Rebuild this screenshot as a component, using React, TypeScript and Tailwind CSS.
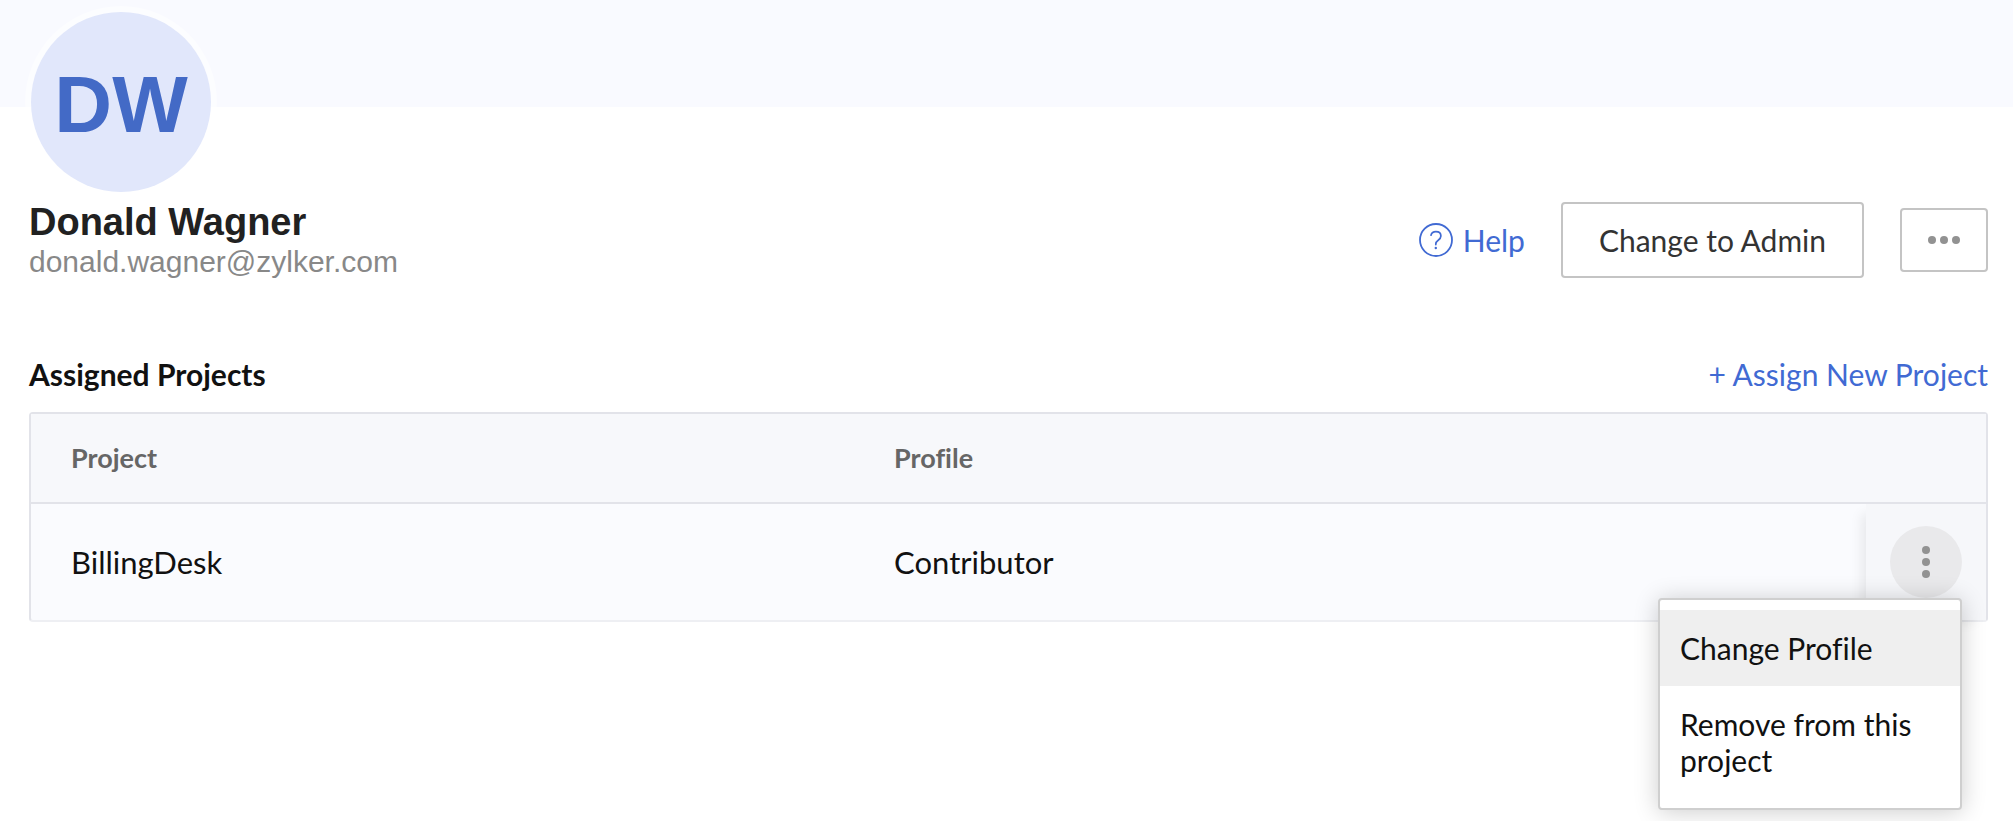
import { useState } from "react";

const projects = [{ name: "BillingDesk", profile: "Contributor" }];

function HelpIcon() {
  return (
    <svg viewBox="0 0 34 34" className="size-[34px] shrink-0" fill="none" stroke="currentColor" aria-hidden="true">
      <circle cx="17" cy="17" r="16" strokeWidth="1.8" />
      <path
        d="M12 12.2c.6-2.2 2.4-3.5 4.9-3.5 3 0 5 1.7 5 4.3 0 2.1-1.2 3.1-2.7 4.2-1.6 1.1-2.4 2-2.4 3.9v.5"
        strokeWidth="1.7"
        strokeLinecap="round"
      />
      <circle cx="16.8" cy="25" r="1.2" fill="currentColor" stroke="none" />
    </svg>
  );
}

function MoreHorizontal() {
  return (
    <svg viewBox="0 0 32 8" className="h-2 w-8" fill="currentColor" aria-hidden="true">
      <circle cx="4" cy="4" r="4" />
      <circle cx="16" cy="4" r="4" />
      <circle cx="28" cy="4" r="4" />
    </svg>
  );
}

function MoreVertical() {
  return (
    <svg viewBox="0 0 8 32" className="h-8 w-2" fill="currentColor" aria-hidden="true">
      <circle cx="4" cy="4" r="4" />
      <circle cx="4" cy="16" r="4" />
      <circle cx="4" cy="28" r="4" />
    </svg>
  );
}

function RowMenu() {
  const [open, setOpen] = useState(true);
  return (
    <div className="relative mx-auto size-[72px] text-[30px]">
      <button
        type="button"
        aria-label="Project actions"
        aria-haspopup="menu"
        aria-expanded={open}
        onClick={() => setOpen(!open)}
        className="flex size-full items-center justify-center rounded-full bg-[#e9e9eb] text-[#929292]"
      >
        <MoreVertical />
      </button>
      {open && (
        <div
          role="menu"
          className="absolute top-full right-0 z-10 w-[304px] rounded border-2 border-[#cfcfcf] bg-white py-[10px] text-[#111] shadow-[0_2px_24px_rgba(0,0,0,0.2)]"
        >
          <button type="button" role="menuitem" className="block w-full bg-[#efefef] p-5 text-left">
            Change Profile
          </button>
          <button type="button" role="menuitem" className="block w-full p-5 text-left">
            Remove from this project
          </button>
        </div>
      )}
    </div>
  );
}

export default function App() {
  return (
    <div className="min-h-screen bg-white font-['Lato',sans-serif] text-[30px] leading-9 text-[#111] [font-variant-ligatures:none]">
      <div className="h-[107px] bg-[#f9faff]" />
      <main className="pr-[25px] pb-8 pl-[29px]">
        <div className="relative -mt-[95px] ml-[2px] flex size-[180px] items-center justify-center rounded-full bg-[#e1e7fb] pt-1.5 font-['Liberation_Sans',sans-serif] text-[80px] leading-none font-bold text-[#436ac6] shadow-[0_0_0_6px_rgba(255,255,255,0.5)]">
          DW
        </div>
        <header className="mt-2 flex items-center justify-between">
          <div className="font-['Liberation_Sans',sans-serif]">
            <h1 className="text-[38px] leading-[44px] font-bold text-[#212121]">Donald Wagner</h1>
            <p className="text-[#888]">donald.wagner@zylker.com</p>
          </div>
          <div className="flex items-center gap-9">
            <a href="#help" className="flex items-center gap-[10px] text-[#416ad3]">
              <HelpIcon />
              Help
            </a>
            <button type="button" className="rounded border-2 border-[#c4c4c4] px-9 py-[18px] text-[#333]">
              Change to Admin
            </button>
            <button
              type="button"
              aria-label="More options"
              className="flex h-16 w-[88px] items-center justify-center rounded border-2 border-[#c4c4c4] text-[#929292]"
            >
              <MoreHorizontal />
            </button>
          </div>
        </header>

        <section className="mt-[76px]">
          <div className="mb-5 flex items-center justify-between">
            <h2 className="font-bold">Assigned Projects</h2>
            <button type="button" className="text-[#416ad3]">
              + Assign New Project
            </button>
          </div>
          <div className="rounded border-2 border-[#e2e3e9] border-b-[#eeeff3] bg-[#fafbfe]">
            <table className="w-full border-separate border-spacing-0 text-left">
              <thead className="bg-[#f7f8fb] text-[27px] text-[#666]">
                <tr>
                  <th scope="col" className="h-[90px] w-[42%] border-b-2 border-[#e2e3e9] px-10 font-bold">Project</th>
                  <th scope="col" className="border-b-2 border-[#e2e3e9] px-[42px] font-bold">Profile</th>
                  <td className="w-[120px] border-b-2 border-[#e2e3e9]" />
                </tr>
              </thead>
              <tbody className="text-[31px]">
                {projects.map((project) => (
                  <tr key={project.name}>
                    <td className="h-[116px] px-10">{project.name}</td>
                    <td className="px-[42px]">{project.profile}</td>
                    <td className="bg-[#f6f7fa] p-0 shadow-[-8px_6px_12px_-4px_rgba(0,0,0,0.08)] [clip-path:inset(0_0_-300px_-300px)]">
                      <RowMenu />
                    </td>
                  </tr>
                ))}
              </tbody>
            </table>
          </div>
        </section>
      </main>
    </div>
  );
}
